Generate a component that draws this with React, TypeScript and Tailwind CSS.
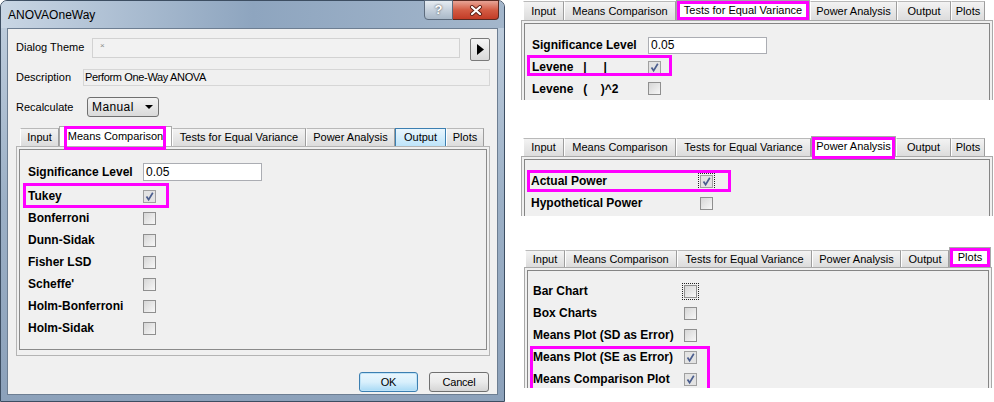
import clsx from 'clsx'

type TabDef = { label: string; w: string; hover?: boolean }

const leftTabs: TabDef[] = [
  { label: 'Input', w: 'w-[39px]' },
  { label: 'Means Comparison', w: 'w-[113px]' },
  { label: 'Tests for Equal Variance', w: 'w-[134px]' },
  { label: 'Power Analysis', w: 'w-[89px]' },
  { label: 'Output', w: 'w-[51px]', hover: true },
  { label: 'Plots', w: 'w-[38px]' },
]

const tabsA: TabDef[] = [
  { label: 'Input', w: 'w-[41px]' },
  { label: 'Means Comparison', w: 'w-[112px]' },
  { label: 'Tests for Equal Variance', w: 'w-[134px]' },
  { label: 'Power Analysis', w: 'w-[87px]' },
  { label: 'Output', w: 'w-[54px]' },
  { label: 'Plots', w: 'w-[34px]' },
]

const tabsB: TabDef[] = [
  { label: 'Input', w: 'w-[41px]' },
  { label: 'Means Comparison', w: 'w-[112px]' },
  { label: 'Tests for Equal Variance', w: 'w-[135px]' },
  { label: 'Power Analysis', w: 'w-[85px]' },
  { label: 'Output', w: 'w-[55px]' },
  { label: 'Plots', w: 'w-[34px]' },
]

const tabsC: TabDef[] = [
  { label: 'Input', w: 'w-[40px]' },
  { label: 'Means Comparison', w: 'w-[112px]' },
  { label: 'Tests for Equal Variance', w: 'w-[135px]' },
  { label: 'Power Analysis', w: 'w-[89px]' },
  { label: 'Output', w: 'w-[48px]' },
  { label: 'Plots', w: 'w-[42px]' },
]

const methods = ['Bonferroni', 'Dunn-Sidak', 'Fisher LSD', "Scheffe'", 'Holm-Bonferroni', 'Holm-Sidak']

function Tabs({ tabs, sel, h, mark }: { tabs: TabDef[]; sel: number; h: string; mark: string }) {
  return (
    <div className="relative z-10 flex h-[20px] items-end text-[11px]">
      {tabs.map((t, i) =>
        i === sel ? (
          <div key={t.label} className={clsx('relative flex h-[20px] shrink-0 items-center justify-center border-x border-t border-[#a9a9a9] bg-white', t.w)}>
            {t.label}
            <span className={clsx('absolute border-[3px] border-[#ff00ff]', mark)} />
          </div>
        ) : (
          <div
            key={t.label}
            className={clsx(
              'flex shrink-0 items-center justify-center border-x border-t',
              h,
              t.w,
              t.hover
                ? 'border-[#3c7fb1] bg-gradient-to-b from-[#eaf6fd] to-[#bde4fa]'
                : 'border-t-[#b9b9b9] border-l-white border-r-[#9d9d9d] bg-gradient-to-b from-[#f3f3f3] to-[#dcdcdc]'
            )}
          >
            {t.label}
          </div>
        )
      )}
    </div>
  )
}

function Check({ on, focus }: { on?: boolean; focus?: boolean }) {
  return (
    <span
      className={clsx(
        'relative block size-[13px] shrink-0 border',
        on ? 'border-[#a0a0a0] bg-[#e3e3e3]' : 'border-[#8f8f8f] bg-gradient-to-br from-[#d6d6d6] to-[#f7f7f7]',
        focus && 'outline-1 outline-offset-[1px] outline-[#222] outline-dotted'
      )}
    >
      {on && (
        <svg viewBox="0 0 11 11" className="absolute left-0 top-0 size-[11px]">
          <path d="M2.5 5.5 L4.6 8.6 L8.8 1.8" fill="none" stroke="#4b5e8e" strokeWidth="1.7" />
        </svg>
      )}
    </span>
  )
}

function Row({ label, col, on, focus, h = 'h-[22px]', children }: { label: string; col: string; on?: boolean; focus?: boolean; h?: string; children?: React.ReactNode }) {
  return (
    <div className={clsx('relative flex items-center', h)}>
      <span className={clsx('shrink-0 whitespace-pre text-[12px] font-bold', col)}>{label}</span>
      <Check on={on} focus={focus} />
      {children}
    </div>
  )
}

function SigRow({ col, inputH }: { col: string; inputH: string }) {
  return (
    <div className="flex h-[22px] items-center">
      <span className={clsx('shrink-0 text-[12px] font-bold', col)}>Significance Level</span>
      <div className={clsx('flex w-[119px] items-center border border-[#abadb3] bg-white pl-[2px] text-[12px]', inputH)}>0.05</div>
    </div>
  )
}

function LeftDialog() {
  return (
    <div className="flex h-[402px] w-[505px] shrink-0 flex-col rounded-t-[7px] border border-[#3d4e62] bg-gradient-to-b from-[#c2d0df] via-[#9cb0c6] to-[#8ca1ba] px-[6px] pb-[6px]">
      <div className="-mx-[6px] flex h-[27px] rounded-t-[6px] bg-gradient-to-r from-[#c9d6e4] via-[#8ea5bf] to-[#a3b6cb]">
        <span className="self-center pl-[7px] text-[12px]">ANOVAOneWay</span>
        <div className="ml-auto mr-[5px] -mt-px flex self-start">
          <div className="flex h-[20px] w-[29px] items-center justify-center rounded-bl-[4px] border border-[#5c6b7d] bg-gradient-to-b from-[#e6ecf2] via-[#c6d1dd] to-[#a9b8c8] text-[13px] font-bold text-white [text-shadow:0_0_2px_#333]">
            ?
          </div>
          <div className="flex h-[20px] w-[46px] items-center justify-center rounded-br-[4px] border border-l-0 border-[#5a2a22] bg-gradient-to-b from-[#e7a496] via-[#d35b43] to-[#c23b26]">
            <svg width="14" height="11" viewBox="0 0 14 11">
              <path d="M3 2 L11 9 M11 2 L3 9" stroke="#5c1e14" strokeWidth="4" strokeLinecap="round" />
              <path d="M3 2 L11 9 M11 2 L3 9" stroke="#fff" strokeWidth="2.2" strokeLinecap="round" />
            </svg>
          </div>
        </div>
      </div>

      <div className="flex flex-1 flex-col border border-[#6d7e92] bg-[#f0f0f0]">
        <div className="mt-[9px] flex h-[23px] items-start pl-[8px]">
          <span className="w-[76px] shrink-0 pt-[1px] text-[11px]">Dialog Theme</span>
          <div className="h-[20px] w-[368px] border border-[#d2d2d2] bg-[#f2f2f2] pl-[7px] text-[8px] leading-[14px] text-[#8a8a8a]">×</div>
          <div className="ml-[10px] flex h-[23px] w-[20px] items-center justify-center rounded-[2px] border border-[#7a7a7a] bg-gradient-to-b from-[#f5f5f5] to-[#d9d9d9]">
            <svg width="7" height="11" viewBox="0 0 7 11">
              <path d="M0 0 L7 5.5 L0 11 Z" fill="#000" />
            </svg>
          </div>
        </div>

        <div className="mt-[8px] flex h-[17px] items-center pl-[8px]">
          <span className="w-[67px] shrink-0 text-[11px]">Description</span>
          <div className="flex h-[17px] w-[407px] items-center border border-[#d6d6d6] bg-[#f0f0f0] pl-[1px] text-[11px] tracking-[-0.35px]">Perform One-Way ANOVA</div>
        </div>

        <div className="mt-[11px] flex h-[20px] items-center pl-[8px]">
          <span className="w-[71px] shrink-0 text-[11px]">Recalculate</span>
          <div className="flex h-[20px] w-[72px] items-center rounded-[3px] border border-[#707070] bg-gradient-to-b from-[#f3f3f3] to-[#dadada] pl-[4px] text-[12px] tracking-[0.4px]">
            Manual
            <svg className="ml-auto mr-[5px]" width="8" height="4" viewBox="0 0 8 4">
              <path d="M0 0 L8 0 L4 4 Z" fill="#000" />
            </svg>
          </div>
        </div>

        <div className="ml-[8px] mt-[9px] w-[474px]">
          <div className="pl-[4px]">
            <Tabs tabs={leftTabs} sel={1} h="h-[18px]" mark="left-[4px] right-[5px] -top-[1px] -bottom-[4px]" />
          </div>
          <div className="border border-[#b4b4b4] p-[2px] pb-[5px]">
            <div className="border border-[#8a8a8a] pb-[10px] pl-[8px] pt-[11px]">
              <SigRow col="w-[115px]" inputH="h-[18px]" />
              <div className="mt-[2px]">
                <Row label="Tukey" col="w-[115px]" on>
                  <span className="absolute -left-[5px] -top-[2px] h-[25px] w-[146px] border-[3px] border-[#ff00ff]" />
                </Row>
                {methods.map((m) => (
                  <Row key={m} label={m} col="w-[115px]" />
                ))}
              </div>
            </div>
          </div>
        </div>

        <div className="mt-[16px] flex justify-end gap-[11px] pr-[8px] text-[11px] tracking-[-0.2px]">
          <div className="flex h-[20px] w-[59px] items-center justify-center rounded-[3px] border border-[#3c7fb1] bg-gradient-to-b from-[#eaf6fd] via-[#d9f0fc] to-[#a7d9f5] shadow-[inset_0_0_0_1px_#bfe3f7]">OK</div>
          <div className="flex h-[20px] w-[60px] items-center justify-center rounded-[3px] border border-[#707070] bg-gradient-to-b from-[#f2f2f2] via-[#ebebeb] to-[#d5d5d5]">Cancel</div>
        </div>
      </div>
    </div>
  )
}

function PanelBody({ h, pl, pt, children }: { h: string; pl: string; pt: string; children: React.ReactNode }) {
  return (
    <div className={clsx('overflow-hidden border-x border-t border-[#a9a9a9] bg-[#f0f0f0] px-[2px] pt-[2px]', h)}>
      <div className={clsx('h-full border-x border-t border-[#858585]', pl, pt)}>{children}</div>
    </div>
  )
}

export default function App() {
  return (
    <div className="flex h-[402px] w-[994px] overflow-hidden bg-white font-['Liberation_Sans',Arial,sans-serif] text-black">
      <LeftDialog />

      <div className="ml-[16px] flex flex-col">
        <div className="w-[472px]">
          <div className="pl-[2px]">
            <Tabs tabs={tabsA} sel={2} h="h-[19px]" mark="inset-0" />
          </div>
          <PanelBody h="h-[80px]" pl="pl-[7px]" pt="pt-[10px]">
            <SigRow col="w-[116px]" inputH="h-[17px]" />
            <Row label="Levene   |     |" col="w-[116px]" on>
              <span className="absolute -left-[5px] -top-[1px] h-[21px] w-[145px] border-[3px] border-[#ff00ff]" />
            </Row>
            <Row label="Levene   (    )^2" col="w-[116px]" h="h-[21px]" />
          </PanelBody>
        </div>

        <div className="mt-[36px] w-[472px]">
          <div className="pl-[2px]">
            <Tabs tabs={tabsB} sel={3} h="h-[18px]" mark="inset-x-0 top-0 -bottom-[3px]" />
          </div>
          <PanelBody h="h-[60px]" pl="pl-[6px]" pt="pt-[10px]">
            <Row label="Actual Power" col="w-[169px]" on focus>
              <span className="absolute -left-[4px] top-0 h-[22px] w-[204px] border-[3px] border-[#ff00ff]" />
            </Row>
            <Row label="Hypothetical Power" col="w-[169px]" />
          </PanelBody>
        </div>

        <div className="ml-[3px] mt-[31px] w-[468px]">
          <div className="pl-[1px]">
            <Tabs tabs={tabsC} sel={5} h="h-[17px]" mark="inset-0" />
          </div>
          <PanelBody h="h-[121px]" pl="pl-[5px]" pt="pt-[9px]">
            <Row label="Bar Chart" col="w-[151px]" focus />
            <Row label="Box Charts" col="w-[151px]" />
            <Row label="Means Plot (SD as Error)" col="w-[151px]" />
            <div className="relative">
              <Row label="Means Plot (SE as Error)" col="w-[151px]" on />
              <Row label="Means Comparison Plot" col="w-[151px]" on />
              <span className="absolute -left-[3px] top-0 h-[45px] w-[180px] border-[3px] border-[#ff00ff]" />
            </div>
          </PanelBody>
        </div>
      </div>
    </div>
  )
}
